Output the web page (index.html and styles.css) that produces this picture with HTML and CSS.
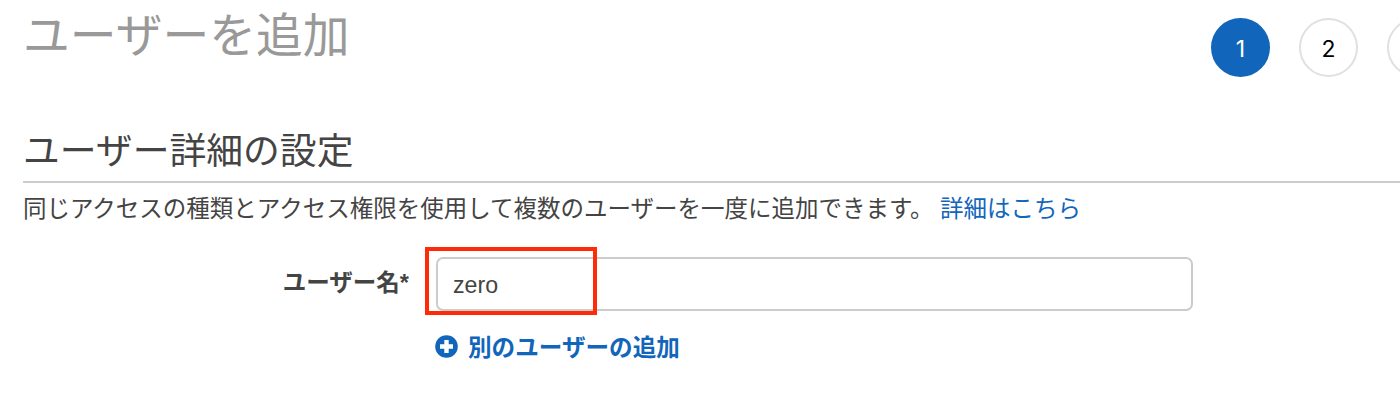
FILE: index.html
```html
<!DOCTYPE html>
<html lang="ja">
<head>
    <meta charset="UTF-8">
    <meta name="viewport" content="width=device-width, initial-scale=1.0">
    <title>ユーザーを追加</title>
    <link rel="stylesheet" href="styles.css">
</head>
<body>
    <div class="header">
        <h1 class="title">ユーザーを追加</h1>
        <div class="steps">
            <span class="step active">1</span>
            <span class="step">2</span>
            <span class="step"></span>
        </div>
    </div>
    <div class="section">
        <h2 class="section-title">ユーザー詳細の設定</h2>
        <p class="description"><span class="description-text">同じアクセスの種類とアクセス権限を使用して複数のユーザーを一度に追加できます。</span><a class="link" href="#">詳細はこちら</a></p>
        <div class="form-row">
            <label class="label" for="username">ユーザー名*</label>
            <div class="field">
                <input type="text" id="username" class="username" value="zero">
                <div class="highlight"></div>
                <a class="add-user" href="#">
                    <svg class="plus" viewBox="0 0 23 23" width="23" height="23">
                        <circle cx="11.5" cy="11.5" r="11.3" fill="#1166bb"/>
                        <path d="M11.5 5v13M5 11.5h13" stroke="#fff" stroke-width="4.4"/>
                    </svg>
                    <span class="add-text">別のユーザーの追加</span>
                </a>
            </div>
        </div>
    </div>
</body>
</html>
```
FILE: styles.css
```css
* {
    box-sizing: border-box;
}
body {
    margin: 0;
    height: 407px;
    overflow: hidden;
    background-color: white;
    color: #444;
    font-family: "Liberation Sans", "Noto Sans CJK JP", sans-serif;
}
a {
    color: #1166bb;
    text-decoration: none;
}
.header {
    display: flex;
    height: 121px;
    padding-left: 23px;
}
.title {
    width: 1188px;
    flex-shrink: 0;
    margin: 0;
    color: #999;
    font-size: 46.8px;
    font-weight: normal;
    line-height: 73px;
    white-space: nowrap;
}
.steps {
    display: flex;
    gap: 29px;
    padding-top: 18px;
}
.step {
    flex-shrink: 0;
    width: 59px;
    height: 59px;
    border: 2px solid #e0e0e0;
    border-radius: 50%;
    color: black;
    font-family: Inter, "Liberation Sans", sans-serif;
    font-size: 23px;
    line-height: 59px;
    text-align: center;
}
.step.active {
    border-color: #1166bb;
    background-color: #1166bb;
    color: white;
}
.section {
    padding-left: 23px;
}
.section-title {
    height: 62px;
    margin: 0;
    border-bottom: 2px solid #ccc;
    font-size: 36.8px;
    font-weight: normal;
    line-height: 61px;
}
.description {
    display: flex;
    margin: 0;
    height: 74px;
    font-size: 23.5px;
    line-height: 52px;
    white-space: nowrap;
}
.description-text {
    width: 917px;
}
.form-row {
    display: flex;
}
.label {
    width: 386px;
    margin-right: 27px;
    font-size: 23.5px;
    font-weight: bold;
    line-height: 52px;
    text-align: right;
}
.field {
    position: relative;
    width: 757px;
}
.username {
    display: block;
    width: 757px;
    height: 54px;
    padding: 2px 15px 0;
    border: 2px solid #ccc;
    border-radius: 7px;
    color: #444;
    font-family: inherit;
    font-size: 23.2px;
}
/* red frame over the start of the input */
.highlight {
    position: absolute;
    top: -10px;
    left: -11px;
    width: 172px;
    height: 68px;
    border: 4px solid #ff2a08;
}
.add-user {
    display: flex;
    align-items: center;
    gap: 10px;
    height: 36px;
    margin-top: 17px;
    margin-left: -1px;
    font-size: 23.6px;
    font-weight: bold;
    white-space: nowrap;
}
```
